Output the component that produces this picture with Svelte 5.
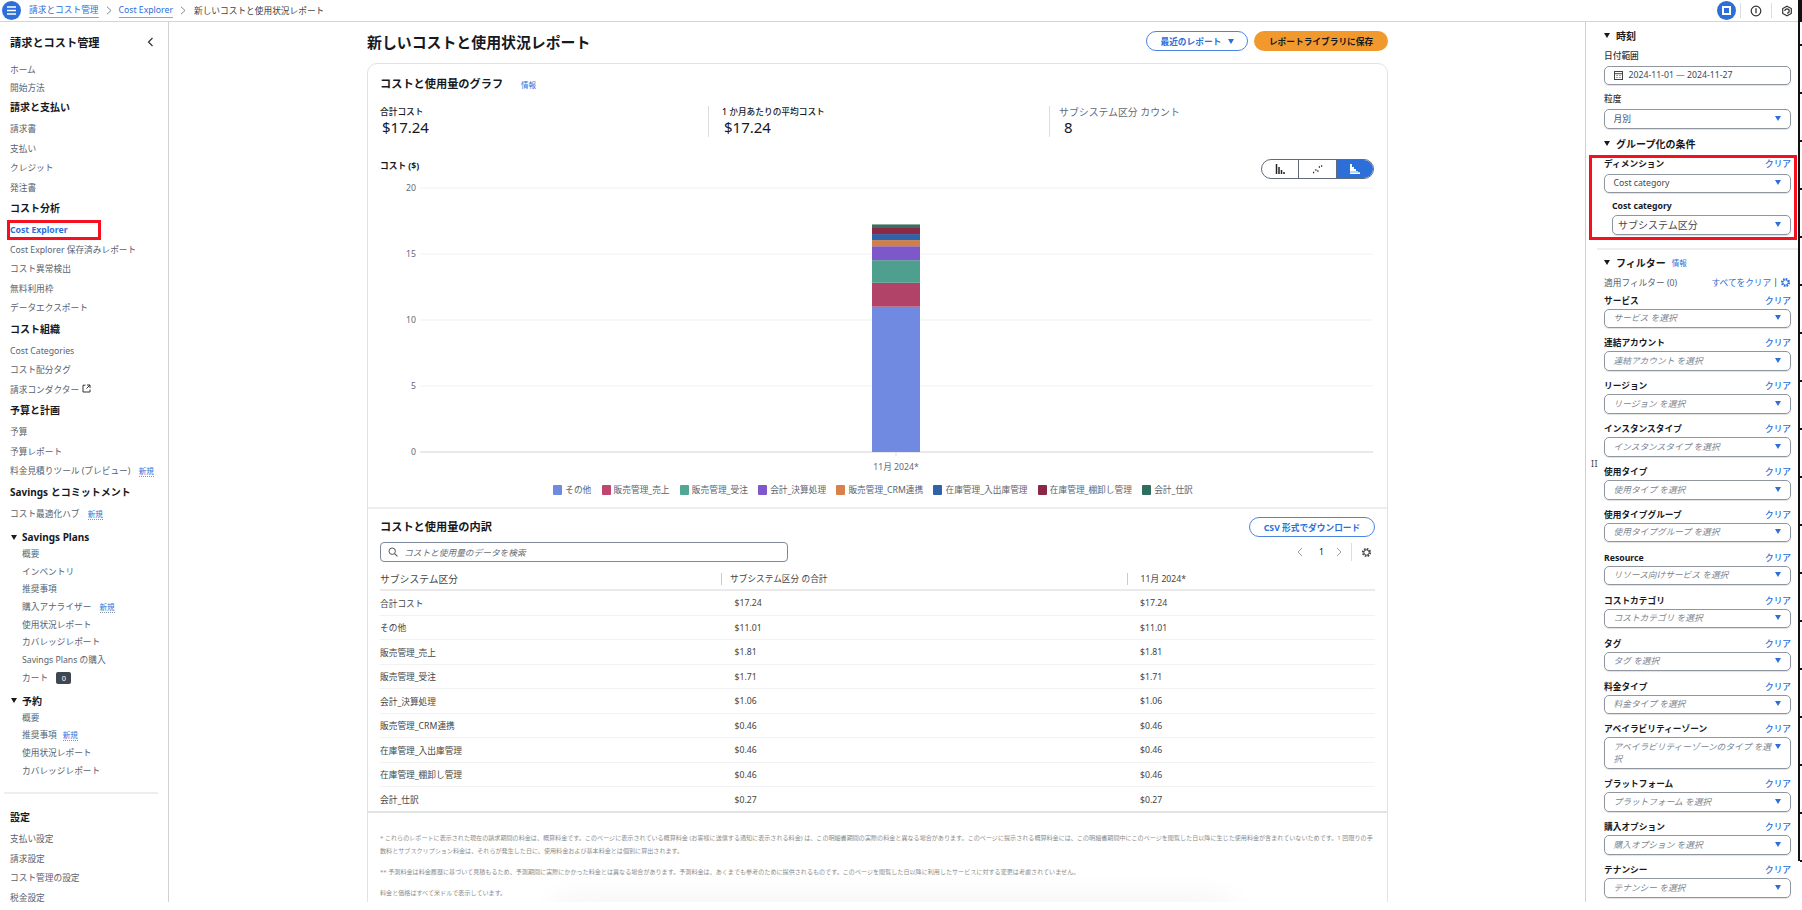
<script>
  const navTop = ['ホーム', '開始方法'];
  const groups = [
    { head: '請求と支払い', items: ['請求書', '支払い', 'クレジット', '発注書'] },
    { head: 'コスト分析', items: ['Cost Explorer', 'Cost Explorer 保存済みレポート', 'コスト異常検出', '無料利用枠', 'データエクスポート'] },
    { head: 'コスト組織', items: ['Cost Categories', 'コスト配分タグ', '請求コンダクター'] },
    { head: '予算と計画', items: ['予算', '予算レポート', '料金見積りツール (プレビュー)'] },
    { head: 'Savings とコミットメント', items: ['コスト最適化ハブ'] }
  ];
  const isNew = new Set(['料金見積りツール (プレビュー)', 'コスト最適化ハブ', '購入アナライザー']);
  const savings = ['概要', 'インベントリ', '推奨事項', '購入アナライザー', '使用状況レポート', 'カバレッジレポート', 'Savings Plans の購入', 'カート'];
  const reserved = ['概要', '推奨事項', '使用状況レポート', 'カバレッジレポート'];
  const settings = ['支払い設定', '請求設定', 'コスト管理の設定', '税金設定'];

  const filters = [
    ['サービス', 'サービス を選択'], ['連結アカウント', '連結アカウント を選択'], ['リージョン', 'リージョン を選択'],
    ['インスタンスタイプ', 'インスタンスタイプ を選択'], ['使用タイプ', '使用タイプ を選択'], ['使用タイプグループ', '使用タイプグループ を選択'],
    ['Resource', 'リソース向けサービス を選択'], ['コストカテゴリ', 'コストカテゴリ を選択'], ['タグ', 'タグ を選択'], ['料金タイプ', '料金タイプ を選択'],
    ['アベイラビリティーゾーン', 'アベイラビリティーゾーンのタイプ を選択'], ['プラットフォーム', 'プラットフォーム を選択'],
    ['購入オプション', '購入オプション を選択'], ['テナンシー', 'テナンシー を選択']
  ];

  const series = [
    ['その他', 11.01, '#6f8ae0', '#6f8ae0'], ['販売管理_売上', 1.81, '#b24368', '#c0466e'], ['販売管理_受注', 1.71, '#4f9f8e', '#4fa794'],
    ['会計_決算処理', 1.06, '#7d58c8', '#7f58cb'], ['販売管理_CRM連携', 0.46, '#d27f47', '#d9814a'], ['在庫管理_入出庫管理', 0.46, '#2f62a6', '#2f62a6'],
    ['在庫管理_棚卸し管理', 0.46, '#8b2846', '#8b2846'], ['会計_仕訳', 0.27, '#3a6f62', '#2f6d5f']
  ];
  const scale = 13.2;
  let acc = 272;
  const bars = series.map((s) => {
    const h = s[1] * scale;
    acc -= h;
    return { y: acc, h, color: s[2] };
  });
  const ticks = [[20, 8], [15, 74], [10, 140], [5, 206]];
  const rows = [
    ['合計コスト', '$17.24'], ['その他', '$11.01'], ['販売管理_売上', '$1.81'], ['販売管理_受注', '$1.71'], ['会計_決算処理', '$1.06'],
    ['販売管理_CRM連携', '$0.46'], ['在庫管理_入出庫管理', '$0.46'], ['在庫管理_棚卸し管理', '$0.46'], ['会計_仕訳', '$0.27']
  ];
  const marks = Array.from({ length: 18 }, (_, i) => 44 + i * 48);
</script>

<div class="page">
  <header class="topbar">
    <span class="burger">
      <svg width="19" height="19" viewBox="0 0 19 19"><circle cx="9.5" cy="9.5" r="9.5" fill="#2d6fd9" /><path d="M5 6h9M5 9.5h9M5 13h9" stroke="#fff" stroke-width="1.5" /></svg>
    </span>
    <a class="crumb">請求とコスト管理</a>
    <svg class="chev" width="6" height="9" viewBox="0 0 6 9"><path d="M1 .8 5 4.5 1 8.2" fill="none" stroke="#7d8998" stroke-width="1" /></svg>
    <a class="crumb">Cost Explorer</a>
    <svg class="chev" width="6" height="9" viewBox="0 0 6 9"><path d="M1 .8 5 4.5 1 8.2" fill="none" stroke="#7d8998" stroke-width="1" /></svg>
    <span class="crumb-now">新しいコストと使用状況レポート</span>
    <div class="top-icons">
      <svg class="panel-btn" width="19" height="19" viewBox="0 0 19 19"><circle cx="9.5" cy="9.5" r="9.5" fill="#2d6fd9" /><rect x="5" y="5" width="9" height="9" fill="#fff" /><rect x="7" y="7" width="5" height="5" fill="#2d6fd9" /></svg>
      <i class="sep"></i>
      <svg width="12" height="12" viewBox="0 0 12 12"><circle cx="6" cy="6" r="4.8" fill="none" stroke="#333" stroke-width="1.2" /><path d="M6 3.2v5" stroke="#333" stroke-width="1.3" /></svg>
      <i class="sep"></i>
      <svg width="12" height="12" viewBox="0 0 12 12"><path d="M6 1.2 10.3 3.6v4.8L6 10.8 1.7 8.4V3.6Z" fill="none" stroke="#333" stroke-width="1.2" /><path d="M3.8 6a2.2 2.2 0 1 1 2.2 2.2" fill="none" stroke="#333" stroke-width="1.2" /></svg>
    </div>
  </header>

  <div class="layout">
    <nav class="side">
      <div class="side-title"><span>請求とコスト管理</span>
        <svg width="7" height="10" viewBox="0 0 7 10"><path d="M5.5 1 1.5 5l4 4" fill="none" stroke="#333" stroke-width="1.2" /></svg>
      </div>
      {#each navTop as t}<div class="item top">{t}</div>{/each}
      {#each groups as g}
        <div class="head">{g.head}</div>
        {#each g.items as t}
          <div class="item" class:active={t === 'Cost Explorer'}>
            {t}
            {#if t === 'Cost Explorer'}<span class="red-nav"></span>{/if}
            {#if isNew.has(t)}<span class="new">新規</span>{/if}
            {#if t === '請求コンダクター'}
              <svg class="ext" width="9" height="9" viewBox="0 0 9 9"><path d="M3.5 1.2H1v6.8h7V5.5M5 1h3v3M8 1 4.5 4.5" fill="none" stroke="#333" stroke-width="1" /></svg>
            {/if}
          </div>
        {/each}
      {/each}
      <div class="sub-head"><span class="caret"></span>Savings Plans</div>
      {#each savings as t}
        <div class="sub">{t}
          {#if isNew.has(t)}<span class="new">新規</span>{/if}
          {#if t === 'カート'}<span class="count">0</span>{/if}
        </div>
      {/each}
      <div class="sub-head"><span class="caret"></span>予約</div>
      {#each reserved as t}
        <div class="sub">{t}{#if t === '推奨事項'}<span class="new">新規</span>{/if}</div>
      {/each}
      <div class="side-rule"></div>
      <div class="head settings">設定</div>
      {#each settings as t}<div class="item">{t}</div>{/each}
    </nav>

    <main class="main">
      <div class="title-row">
        <h1>新しいコストと使用状況レポート</h1>
        <div class="actions">
          <button class="btn outline recent">最近のレポート <span class="tri"></span></button>
          <button class="btn primary">レポートライブラリに保存</button>
        </div>
      </div>

      <section class="card">
        <div class="pad">
          <h2 class="card-title">コストと使用量のグラフ <span class="info">情報</span></h2>
          <div class="metrics">
            <div class="metric"><div class="m-label">合計コスト</div><div class="m-value">$17.24</div></div>
            <div class="metric ruled"><div class="m-label">1 か月あたりの平均コスト</div><div class="m-value">$17.24</div></div>
            <div class="metric ruled third"><div class="m-label">サブシステム区分 カウント</div><div class="m-value">8</div></div>
          </div>
          <div class="chart-head">
            <span class="axis-title">コスト ($)</span>
            <div class="toggle">
              <span class="seg">
                <svg width="11" height="10" viewBox="0 0 11 10"><path d="M1.5 0v10M4 3v7M6.5 6v4M9 8v2" stroke="#222" stroke-width="1.5" /></svg>
              </span>
              <span class="seg">
                <svg width="11" height="10" viewBox="0 0 11 10"><path d="M1 8.5h1.2M3.3 6h1.2M5.3 7h1.2M6.8 3h1.2M9 2h1.2" stroke="#222" stroke-width="1.3" /></svg>
              </span>
              <span class="seg on">
                <svg width="11" height="10" viewBox="0 0 11 10"><path d="M2 0v10M4 3v7M6 5v5M8 7v3M10 8v2" stroke="#fff" stroke-width="2" /><path d="M0 8h11" stroke="#2d6fd9" stroke-width=".6" /></svg>
              </span>
            </div>
          </div>
        </div>

        <svg class="plot" width="1019" height="300" viewBox="0 0 1019 300">
          {#each ticks as t}
            <line x1="52" x2="1005" y1={t[1]} y2={t[1]} stroke="#f1f1f1" />
            <text x="48" y={t[1] + 3} text-anchor="end">{t[0]}</text>
          {/each}
          <line x1="52" x2="1005" y1="272" y2="272" stroke="#e9e9e9" stroke-width="2" />
          <text x="48" y="275" text-anchor="end">0</text>
          <line x1="528" x2="528" y1="272" y2="276" stroke="#ddd" />
          {#each bars as b}
            <rect x="504" y={b.y} width="48" height={b.h} fill={b.color} />
          {/each}
          <text x="528" y="290" text-anchor="middle">11月 2024*</text>
        </svg>

        <div class="legend">
          {#each series as s}
            <span class="lg"><i style="background:{s[3]}"></i>{s[0]}</span>
          {/each}
        </div>

        <div class="rule"></div>

        <div class="pad">
          <div class="table-head">
            <h2 class="card-title">コストと使用量の内訳</h2>
            <button class="btn outline csv">CSV 形式でダウンロード</button>
          </div>
          <div class="search-row">
            <div class="search">
              <svg width="10" height="10" viewBox="0 0 10 10"><circle cx="4.2" cy="4.2" r="3.2" fill="none" stroke="#555" stroke-width="1" /><path d="m6.6 6.6 2.8 2.8" stroke="#555" stroke-width="1.1" /></svg>
              コストと使用量のデータを検索
            </div>
            <div class="pager">
              <svg width="6" height="10" viewBox="0 0 6 10"><path d="M5 1 1 5l4 4" fill="none" stroke="#9aa0a8" /></svg>
              <span class="page-no">1</span>
              <svg width="6" height="10" viewBox="0 0 6 10"><path d="m1 1 4 4-4 4" fill="none" stroke="#9aa0a8" /></svg>
              <i class="pager-sep"></i>
              <svg width="11" height="11" viewBox="0 0 11 11"><circle cx="5.5" cy="5.5" r="3.6" fill="none" stroke="#444" stroke-width="2" stroke-dasharray="1.6 1.2" /><circle cx="5.5" cy="5.5" r="2.6" fill="none" stroke="#444" stroke-width=".9" /></svg>
            </div>
          </div>
          <div class="thead">
            <span class="th1">サブシステム区分</span>
            <span class="th2">サブシステム区分 の合計</span>
            <span class="th3">11月 2024*</span>
          </div>
          {#each rows as r}
            <div class="tr"><span>{r[0]}</span><span class="td2">{r[1]}</span><span class="td3">{r[1]}</span></div>
          {/each}
        </div>

        <div class="table-end"></div>
        <div class="notes">
          <p>* これらのレポートに表示された現在の請求期間の料金は、概算料金です。このページに表示されている概算料金 (お客様に送信する通知に表示される料金) は、この明細書期間の実際の料金と異なる場合があります。このページに提示される概算料金には、この明細書期間中にこのページを閲覧した日以降に生じた使用料金が含まれていないためです。1 回限りの手数料とサブスクリプション料金は、それらが発生した日に、使用料金および基本料金とは個別に算出されます。</p>
          <p>** 予測料金は料金履歴に基づいて見積もるため、予測期間に実際にかかった料金とは異なる場合があります。予測料金は、あくまでも参考のために提供されるものです。このページを閲覧した日以降に利用したサービスに対する変更は考慮されていません。</p>
          <p>料金と価格はすべて米ドルで表示しています。</p>
        </div>
      </section>
      <div class="haze"></div>
    </main>

    <aside class="panel">
      <span class="grip">II</span>
      <div class="p-head first"><span class="caret"></span>時刻</div>
      <div class="p-label">日付範囲</div>
      <div class="select date">
        <svg width="9" height="9" viewBox="0 0 9 9"><rect x=".5" y=".5" width="8" height="8" fill="none" stroke="#444" /><path d="M.5 2.7h8M2.5 4.5h1M5.5 4.5h1M2.5 6.5h1M5.5 6.5h1" stroke="#444" /></svg>
        2024-11-01 — 2024-11-27
      </div>
      <div class="p-label">粒度</div>
      <div class="select g3"><span>月別</span><span class="arrow"></span></div>
      <div class="p-head mid"><span class="caret"></span>グループ化の条件</div>
      <div class="grouped">
        <span class="red-panel"></span>
        <div class="f-row"><b>ディメンション</b><a>クリア</a></div>
        <div class="select"><span>Cost category</span><span class="arrow"></span></div>
        <div class="inner-label">Cost category</div>
        <div class="select inner"><span>サブシステム区分</span><span class="arrow"></span></div>
      </div>
      <div class="p-rule"></div>
      <div class="p-head filt"><span class="caret"></span>フィルター<span class="info big">情報</span></div>
      <div class="applied">
        <span>適用フィルター (0)</span>
        <span class="applied-r"><a>すべてをクリア</a> |
          <svg width="11" height="11" viewBox="0 0 11 11"><circle cx="5.5" cy="5.5" r="3.6" fill="none" stroke="#2d6fd9" stroke-width="2" stroke-dasharray="1.6 1.2" /><circle cx="5.5" cy="5.5" r="2.6" fill="none" stroke="#2d6fd9" stroke-width=".9" /></svg>
        </span>
      </div>
      {#each filters as f}
        <div class="field">
          <div class="f-row"><b>{f[0]}</b><a>クリア</a></div>
          <div class="select ph"><span>{f[1]}</span><span class="arrow"></span></div>
        </div>
      {/each}
    </aside>
  </div>

  <div class="edge">
    {#each marks as m}<i style="top:{m}px"></i>{/each}
  </div>
</div>

<style>
  :global(body) {
    margin: 0;
    background: #fff;
  }
  .page {
    position: relative;
    width: 1802px;
    height: 910px;
    overflow: hidden;
    font-family: "Noto Sans", "Noto Sans CJK JP", sans-serif;
    font-size: 8.7px;
    color: #16191f;
    background: #fff;
  }
  a { color: #2d6fd9; }
  h1, h2, p { margin: 0; }
  .topbar {
    display: flex;
    align-items: center;
    height: 22px;
    box-sizing: border-box;
    border-bottom: 1px solid #d5d5d5;
    padding-left: 2px;
  }
  .burger { display: flex; margin-right: 8px; }
  .crumb {
    color: #2d6fd9;
    font-size: 8.7px;
    line-height: 13px;
    border-bottom: 1px solid #7fa6e6;
  }
  .chev { margin: 0 7px; }
  .crumb-now { font-size: 8.7px; color: #444; margin-left: 1px; }
  .top-icons {
    margin-left: auto;
    display: flex;
    align-items: center;
    gap: 9px;
    padding-right: 9px;
  }
  .panel-btn { margin-right: -4.5px; }
  .sep { width: 1px; height: 15px; background: #ddd; }

  .layout { display: flex; height: 880px; }
  .side {
    width: 169px;
    flex: none;
    box-sizing: border-box;
    border-right: 1px solid #d0d0d0;
    padding: 12px 0 0 10px;
  }
  .side-title {
    display: flex;
    justify-content: space-between;
    align-items: center;
    height: 15px;
    font-size: 11.2px;
    font-weight: 700;
    padding-right: 14px;
    margin-bottom: 12px;
  }
  .item {
    position: relative;
    height: 19.5px;
    line-height: 19.5px;
    color: #59626e;
    white-space: nowrap;
  }
  .item.top { height: 18px; line-height: 18px; }
  .item.active { color: #2d6fd9; font-weight: 700; }
  .head {
    height: 20px;
    line-height: 20px;
    font-size: 10px;
    font-weight: 700;
    margin-bottom: 3px;
    white-space: nowrap;
  }
  .red-nav {
    position: absolute;
    left: -3px;
    top: -1px;
    width: 94px;
    height: 20px;
    box-sizing: border-box;
    border: 3px solid #f5101f;
  }
  .new {
    color: #2d6fd9;
    font-size: 7.5px;
    margin-left: 6px;
    border-bottom: 1px dotted #8a94a3;
  }
  .ext { margin-left: 1px; vertical-align: 0; }
  .sub-head {
    display: flex;
    align-items: center;
    height: 18px;
    margin: 4px 0 0 1px;
    font-size: 10px;
    font-weight: 700;
    white-space: nowrap;
  }
  .sub-head .caret { margin-right: 5px; }
  .caret {
    display: inline-block;
    flex: none;
    width: 0;
    height: 0;
    border-left: 3px solid transparent;
    border-right: 3px solid transparent;
    border-top: 5px solid #16191f;
  }
  .sub {
    height: 17.7px;
    line-height: 17.7px;
    margin-left: 12px;
    color: #59626e;
    white-space: nowrap;
  }
  .count {
    display: inline-block;
    vertical-align: middle;
    width: 15px;
    height: 12px;
    line-height: 12px;
    margin-left: 6px;
    border-radius: 2px;
    background: #414750;
    color: #fff;
    font-size: 7.5px;
    text-align: center;
  }
  .side-rule {
    height: 2px;
    background: #eee;
    margin: 12px 10px 0 -6px;
  }
  .head.settings { margin-top: 13px; }

  .main {
    position: relative;
    width: 1416px;
    height: 880px;
    overflow: hidden;
    flex: none;
    box-sizing: border-box;
    padding: 9px 0 0 198px;
  }
  .title-row {
    display: flex;
    justify-content: space-between;
    align-items: center;
    width: 1021px;
    height: 20px;
    margin-bottom: 12px;
  }
  h1 { font-size: 14.9px; font-weight: 600; }
  .actions { display: flex; gap: 6px; }
  .btn {
    height: 20px;
    padding: 0;
    border-radius: 10px;
    font: inherit;
    font-size: 8.7px;
    font-weight: 700;
    white-space: nowrap;
  }
  .outline { background: #fff; border: 1.5px solid #4d84e0; color: #2d6fd9; }
  .recent { width: 102px; }
  .csv { width: 126px; }
  .primary { width: 134px; background: #f2992e; border: 0; color: #16191f; }
  .tri {
    display: inline-block;
    margin-left: 4px;
    vertical-align: 1px;
    border-left: 3px solid transparent;
    border-right: 3px solid transparent;
    border-top: 5px solid #2d6fd9;
  }
  .card {
    width: 1021px;
    height: 900px;
    box-sizing: border-box;
    border: 1px solid #e2e2e2;
    border-radius: 10px 10px 0 0;
  }
  .pad { padding: 13px 12px 0 12px; }
  .card-title { font-size: 11.2px; font-weight: 700; height: 14px; line-height: 14px; }
  .info { color: #2d6fd9; font-size: 7.5px; font-weight: 400; margin-left: 15px; }
  .info.big { margin-left: 0; }
  .metrics { display: grid; grid-template-columns: 328px 341px 1fr; margin-top: 15px; height: 31px; }
  .metric.ruled { border-left: 1px solid #ddd; padding-left: 13px; }
  .metric.third { padding-left: 9px; }
  .m-label { height: 12px; line-height: 12px; font-weight: 500; color: #16191f; }
  .third .m-label { color: #5f6b7a; font-weight: 400; font-size: 9.9px; }
  .m-value { height: 19px; line-height: 19px; font-size: 15px; padding-left: 2px; }
  .third .m-value { padding-left: 5px; }
  .chart-head { display: flex; justify-content: space-between; margin-top: 22px; height: 21px; }
  .axis-title { font-size: 8.7px; line-height: 14px; font-weight: 700; }
  .toggle {
    display: flex;
    width: 113px;
    height: 20px;
    box-sizing: border-box;
    border: 1.2px solid #5f6b7a;
    border-radius: 10px;
    overflow: hidden;
    margin-right: 1px;
  }
  .seg {
    flex: 1;
    display: flex;
    align-items: center;
    justify-content: center;
    border-left: 1px solid #5f6b7a;
  }
  .seg:first-child { border-left: 0; }
  .seg.on { background: #2d6fd9; }
  .plot { display: block; }
  .plot text { font-size: 8.7px; fill: #5f6b7a; font-family: "Noto Sans", "Noto Sans CJK JP", sans-serif; }
  .legend {
    display: flex;
    justify-content: center;
    gap: 10.3px;
    height: 12px;
    line-height: 12px;
    margin-top: 4px;
    padding-right: 9px;
    color: #59626e;
  }
  .lg { display: flex; align-items: center; white-space: nowrap; }
  .lg i { width: 9px; height: 10px; margin-right: 3px; border-radius: 1px; }
  .rule { height: 2px; background: #eee; margin-top: 11px; }
  .table-head { display: flex; justify-content: space-between; align-items: center; height: 20px; margin-top: -5px; }
  .search-row { display: flex; justify-content: space-between; margin-top: 5px; height: 20px; }
  .search {
    display: flex;
    align-items: center;
    gap: 6px;
    width: 408px;
    box-sizing: border-box;
    padding-left: 7px;
    border: 1.2px solid #7d8998;
    border-radius: 4px;
    color: #687078;
    font-style: italic;
  }
  .pager { display: flex; align-items: center; gap: 12px; padding-right: 3px; }
  .page-no { margin-left: 4px; }
  .pager-sep { width: 1px; height: 18px; background: #ddd; margin: 0 -3px; }
  .thead {
    display: grid;
    grid-template-columns: 341px 405.5px 1fr;
    align-items: center;
    height: 21px;
    margin-top: 6.3px;
    border-bottom: 2px solid #eaeaea;
    color: #444;
  }
  .th1 { font-size: 9.8px; }
  .th2 { border-left: 1px solid #ccc; padding-left: 8px; line-height: 12px; }
  .th3 { border-left: 1px solid #ccc; padding-left: 13px; line-height: 12px; }
  .tr {
    display: grid;
    grid-template-columns: 341px 405.5px 1fr;
    align-items: center;
    height: 24.5px;
    box-sizing: border-box;
    border-bottom: 1px solid #f2f2f2;
    color: #444;
  }
  .tr:last-of-type { border-bottom: 0; }
  .td2 { padding-left: 13.5px; }
  .td3 { padding-left: 13.5px; }
  .table-end { height: 2px; background: #e4e4e4; margin-top: -1px; }
  .notes { padding: 19.5px 12px 0 12px; font-size: 6.08px; line-height: 13px; color: #8c8c8c; }
  .notes p { margin-bottom: 8px; }
  .haze {
    position: absolute;
    left: 377px;
    top: 872px;
    width: 695px;
    height: 60px;
    border-radius: 40px;
    background: #000;
    opacity: .035;
    filter: blur(14px);
    pointer-events: none;
  }

  .panel {
    position: relative;
    width: 217px;
    height: 880px;
    flex: none;
    box-sizing: border-box;
    border-left: 1px solid #d0d0d0;
    padding: 6px 11px 0 18px;
  }
  .grip { position: absolute; left: 5px; top: 435px; font-size: 9px; color: #444; letter-spacing: .5px; }
  .p-head {
    display: flex;
    align-items: center;
    gap: 6px;
    height: 14px;
    font-size: 10px;
    font-weight: 700;
  }
  .p-head.mid { margin-top: 8px; }
  .p-head.filt { margin-top: 5px; }
  .p-label { height: 14px; line-height: 14px; margin-top: 7px; font-weight: 500; color: #333; }
  .select {
    position: relative;
    display: flex;
    justify-content: space-between;
    box-sizing: border-box;
    min-height: 19.5px;
    margin-top: 2.5px;
    padding: 2.5px 9px 2px 8.5px;
    line-height: 12.5px;
    border: 1.3px solid #8f96a0;
    border-radius: 5px;
    box-shadow: 0 1px 1px rgba(0,0,0,.12);
    color: #414750;
  }
  .select.g3 { margin-top: 3px; }
  .select.date { justify-content: flex-start; align-items: center; gap: 6px; font-size: 8.7px; }
  .select.ph { margin-top: 0; font-style: italic; color: #7d8590; }
  .select.inner { margin: 2px 0 0 8px; min-height: 20px; padding-left: 5px; font-size: 10px; }
  .arrow {
    flex: none;
    width: 0;
    height: 0;
    margin-top: 3px;
    margin-left: 1px;
    border-left: 3.2px solid transparent;
    border-right: 3.2px solid transparent;
    border-top: 5px solid #2d6fd9;
  }
  .grouped { position: relative; margin-top: 6px; }
  .red-panel {
    position: absolute;
    left: -15px;
    right: -6px;
    top: -2px;
    bottom: -5px;
    box-sizing: border-box;
    border: 3px solid #f5101f;
    pointer-events: none;
  }
  .grouped .select { margin-top: 3px; }
  .grouped .select.inner { margin-top: 2px; }
  .inner-label { height: 14px; line-height: 14px; margin: 6px 0 0 8px; font-weight: 700; }
  .f-row {
    display: flex;
    justify-content: space-between;
    align-items: center;
    height: 14px;
    line-height: 14px;
  }
  .f-row b { font-weight: 700; }
  .f-row a { font-weight: 500; }
  .field .f-row { height: 16px; }
  .field { margin-bottom: 7.4px; }
  .p-rule { height: 2px; background: #eee; margin: 13px -7px 0 -7px; }
  .applied {
    display: flex;
    justify-content: space-between;
    align-items: center;
    height: 14px;
    margin: 6px 0 3.5px;
    color: #59626e;
  }
  .applied-r { display: flex; align-items: center; gap: 2px; color: #333; }

  .edge {
    position: absolute;
    left: 1798px;
    top: 0;
    width: 4px;
    height: 861px;
    box-sizing: border-box;
    border-left: 2px solid #111;
    pointer-events: none;
    background: linear-gradient(#111 22px, transparent 22px);
  }
  .edge i {
    position: absolute;
    left: 0;
    width: 4px;
    height: 2px;
    background: #111;
  }
</style>
